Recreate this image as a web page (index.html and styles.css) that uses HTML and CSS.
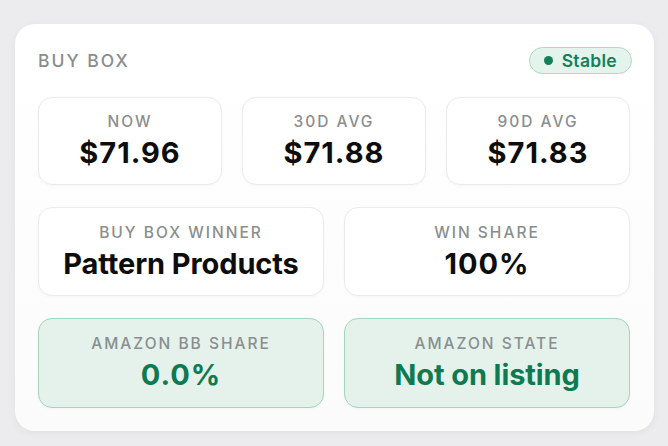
FILE: index.html
```html
<!DOCTYPE html>
<html>
<head>
<meta charset="utf-8">
<link rel="stylesheet" href="styles.css">
</head>
<body>
<div class="panel">
  <div class="header">
    <div class="title">BUY BOX</div>
    <div class="badge"><span class="dot"></span>Stable</div>
  </div>
  <div class="row three">
    <div class="stat"><div class="label">NOW</div><div class="value num">$71.96</div></div>
    <div class="stat"><div class="label">30D AVG</div><div class="value num">$71.88</div></div>
    <div class="stat"><div class="label">90D AVG</div><div class="value num">$71.83</div></div>
  </div>
  <div class="row two">
    <div class="stat"><div class="label">BUY BOX WINNER</div><div class="value">Pattern Products</div></div>
    <div class="stat"><div class="label">WIN SHARE</div><div class="value num">100%</div></div>
  </div>
  <div class="row two tall">
    <div class="stat good"><div class="label">AMAZON BB SHARE</div><div class="value num">0.0%</div></div>
    <div class="stat good"><div class="label">AMAZON STATE</div><div class="value">Not on listing</div></div>
  </div>
</div>
</body>
</html>
```
FILE: styles.css
```css
* { box-sizing: border-box; }
html, body { margin: 0; padding: 0; }
body {
  background: #ececee;
  font-family: Inter, "Noto Sans", "Liberation Sans", sans-serif;
  width: 668px;
  height: 446px;
  overflow: hidden;
}
.panel {
  margin: 24px 0 0 15px;
  width: 639px;
  height: 407px;
  background: linear-gradient(#ffffff, #fbfbfb);
  border-radius: 20px;
  box-shadow: 0 2px 10px rgba(0,0,0,0.05);
  padding: 23px 24px 22px 23px;
  display: flex;
  flex-direction: column;
}
.header {
  display: flex;
  justify-content: space-between;
  align-items: center;
  height: 27px;
  margin-bottom: 23px;
}
.title {
  font-size: 17.5px;
  font-weight: 500;
  letter-spacing: 2px;
  color: #888d8d;
}
.badge {
  height: 27px;
  display: flex;
  align-items: center;
  gap: 9px;
  padding: 0 14px 0 14px;
  margin-right: -2px;
  border: 1px solid #a9dcc5;
  background: #e4f4ed;
  border-radius: 14px;
  color: #14805a;
  font-size: 17.5px;
  font-weight: 600;
  letter-spacing: 0.3px;
}
.dot {
  width: 9px;
  height: 9px;
  border-radius: 50%;
  background: #14805a;
}
.row {
  display: grid;
  gap: 20px;
  height: 88px;
}
.row + .row { margin-top: 22px; }
.row.three { grid-template-columns: repeat(3, 1fr); }
.row.two { grid-template-columns: repeat(2, 1fr); height: 89px; }
.row.tall { height: 90px; }
.stat {
  background: #ffffff;
  border: 1px solid #ebebeb;
  border-radius: 14px;
  box-shadow: 0 1px 3px rgba(0,0,0,0.03);
  display: flex;
  flex-direction: column;
  align-items: center;
  justify-content: center;
  gap: 5px;
  padding-top: 1px;
}
.label {
  font-size: 15.5px;
  line-height: 18px;
  font-weight: 500;
  letter-spacing: 2px;
  color: #8a8e8e;
}
.value {
  font-size: 29px;
  line-height: 34px;
  font-weight: 700;
  color: #0d0d0d;
  letter-spacing: -0.1px;
}
.value.num { letter-spacing: 1px; }
.stat.good {
  background: #e5f2ec;
  border-color: #a2d4be;
}
.stat.good .value { color: #0f7a52; }
```
